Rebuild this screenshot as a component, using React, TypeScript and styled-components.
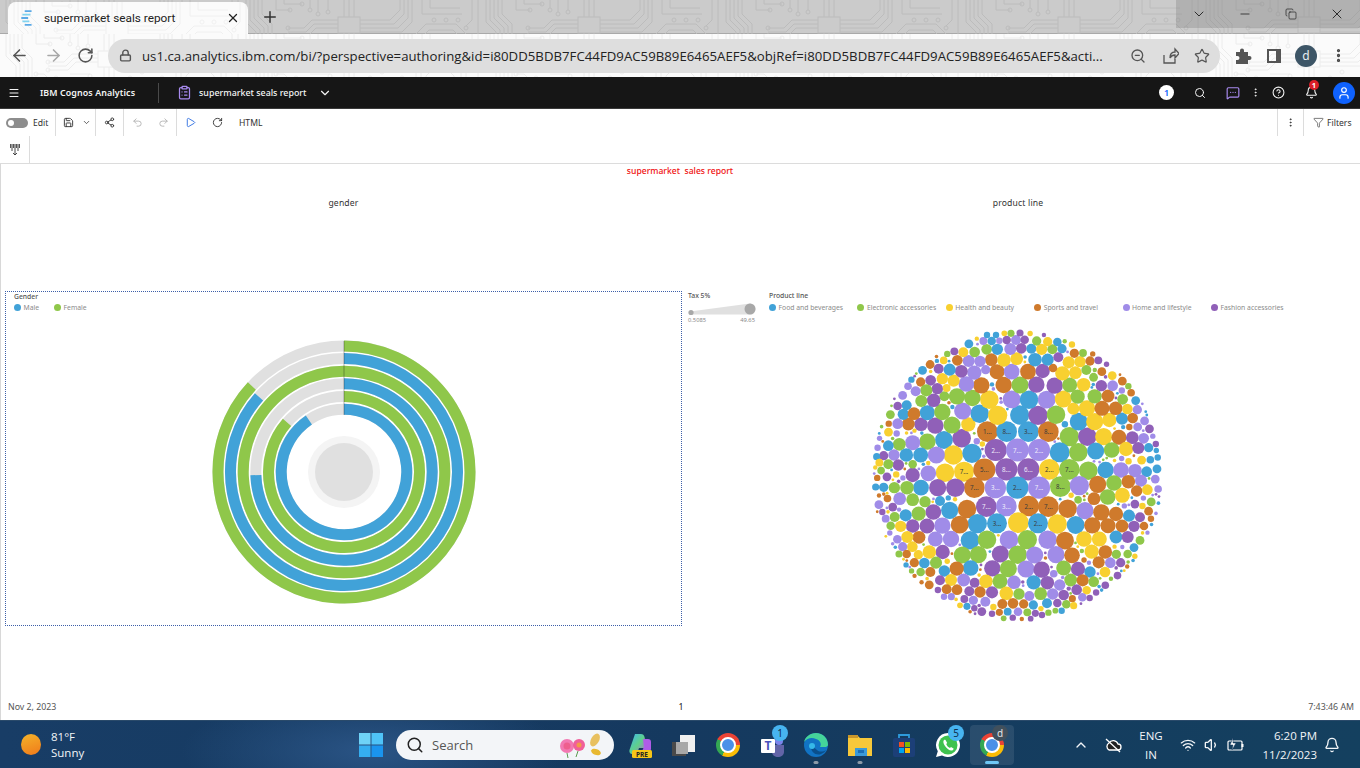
import React, { FC, ReactNode } from 'react'
import styled, { createGlobalStyle } from 'styled-components'
import {
  ArrowLeft,
  ArrowRight,
  Bell,
  ChevronDown,
  ChevronUp,
  ClipboardList,
  CircleHelp,
  Copy,
  Filter,
  Lock,
  Menu,
  MessageSquareMore,
  Minus,
  MoreVertical,
  Play,
  Plus,
  Redo2,
  RotateCw,
  Save,
  Search,
  Share2,
  Star,
  Undo2,
  User,
  Volume1,
  Wifi,
  X,
  ZoomOut,
} from 'lucide-react'

const GlobalStyle = createGlobalStyle`
  html, body { margin: 0; padding: 0; background: #fff; }
  body { font-family: "Noto Sans", "Liberation Sans", sans-serif; overflow: hidden; }
  * { box-sizing: border-box; }
`

const COLORS: Record<string, string> = {
  b: '#41a2d8',
  g: '#8fc74a',
  y: '#f8d030',
  o: '#cf7a2c',
  l: '#a08ce8',
  p: '#9060b8',
}

type Bubble = [number, number, number, string, string?]

// read off the reference in 3x zoom coordinates, top half then bottom half
const TOP: Bubble[] = [
  [367,320,29,'o','1...'],[425,320,29,'b','8...'],[490,320,29,'b','3...'],[550,320,29,'o','8...'],
  [613,335,27,'g'],[667,335,26,'p'],[716,335,24,'y'],[762,337,21,'o'],[802,338,18,'p'],[836,340,15,'l'],
  [237,345,25,'b'],[290,340,26,'p'],[187,350,23,'g'],[143,353,21,'l'],[103,358,18,'g'],[70,362,15,'b'],
  [261,300,24,'g'],[211,302,23,'p'],[168,298,19,'p'],[130,297,18,'o'],[98,296,15,'l'],[310,298,20,'y'],
  [344,266,26,'b'],[398,271,27,'y'],[464,270,27,'b'],[519,271,27,'p'],[573,269,26,'g'],[641,290,25,'b'],
  [689,290,24,'y'],[733,285,20,'y'],[771,281,17,'b'],[803,279,15,'o'],[115,268,16,'b'],[147,266,18,'o'],
  [187,263,21,'b'],[232,261,23,'g'],[293,258,24,'l'],[625,251,17,'y'],[666,250,23,'y'],[711,250,21,'o'],
  [752,250,19,'o'],[787,252,15,'y'],[817,254,13,'l'],[373,224,26,'y'],[440,223,25,'l'],[492,224,26,'b'],
  [545,224,25,'l'],[595,222,24,'y'],[638,215,20,'g'],[689,214,20,'g'],[729,213,18,'o'],[773,223,15,'g'],
  [322,219,23,'g'],[276,214,23,'g'],[238,214,14,'g'],[206,226,19,'p'],[169,228,17,'g'],[125,241,14,'b'],
  [98,243,12,'p'],[349,181,23,'o'],[416,180,23,'o'],[465,180,24,'g'],[514,179,23,'p'],[569,182,23,'p'],
  [614,180,21,'g'],[656,179,19,'y'],[709,182,16,'p'],[743,182,15,'l'],[304,177,22,'l'],[266,167,17,'y'],
  [232,161,16,'y'],[197,166,15,'p'],[167,171,13,'o'],[217,191,16,'p'],[184,196,17,'g'],[152,199,14,'l'],
  [245,189,11,'y'],[396,140,21,'o'],[440,140,22,'l'],[489,140,22,'o'],[533,138,20,'p'],[592,145,20,'y'],
  [631,143,18,'y'],[664,135,14,'g'],[564,129,12,'o'],[328,143,20,'l'],[289,139,18,'p'],[254,134,17,'b'],
  [221,131,14,'p'],[362,134,13,'l'],[379,104,18,'o'],[417,105,19,'y'],[455,101,18,'y'],[510,104,19,'b'],
  [548,104,17,'b'],[580,97,14,'p'],[611,112,17,'y'],[645,110,16,'y'],[675,108,13,'o'],[700,106,11,'p'],
  [345,109,16,'l'],[311,108,17,'l'],[277,106,15,'o'],[365,73,15,'g'],[397,73,16,'b'],[436,72,17,'l'],
  [469,70,15,'p'],[499,71,14,'b'],[530,73,16,'y'],[562,73,14,'g'],[591,71,13,'b'],[628,85,13,'o'],
  [654,84,11,'g'],[295,82,14,'y'],[268,79,11,'p'],[329,81,15,'g'],[425,45,12,'p'],[453,45,14,'l'],
  [479,44,12,'p'],[515,48,13,'g'],[548,50,13,'y'],[577,51,12,'b'],[380,48,12,'b'],[355,48,11,'l'],
  [403,47,9,'l'],[438,25,10,'g'],[465,24,10,'p'],[366,30,9,'b'],[393,30,9,'b'],[418,25,8,'y'],
  [265,390,27,'y'],[321,385,27,'b'],[214,390,24,'l'],[167,390,21,'b'],[124,390,19,'b'],[87,390,16,'l'],
  [56,392,13,'p'],[35,395,10,'b'],[392,375,31,'p','2...'],[457,375,32,'l','7...'],[522,375,31,'l','2...'],
  [584,382,28,'b'],[640,382,26,'g'],[692,378,24,'b'],[740,375,22,'g'],[783,372,20,'y'],[820,369,17,'p'],
  [851,368,13,'b'],[240,443,26,'y'],[297,440,28,'y','7...'],[358,434,31,'o','5...'],[424,433,31,'p','8...'],
  [490,433,31,'p','6...'],[553,433,29,'y','2...'],[613,433,29,'g','7...'],[670,437,26,'g'],[722,435,23,'b'],
  [768,435,22,'l'],[810,437,19,'l'],[845,440,15,'b'],[190,445,22,'l'],[143,450,20,'p'],[100,420,16,'p'],
  [70,418,14,'g'],[43,413,11,'y'],[143,418,12,'g'],
]

const BOTTOM: Bubble[] = [
  [328,38,29,'o','7...'],[391,38,30,'l','3...'],[457,38,31,'b','2...'],[522,38,31,'l','7...'],[586,35,29,'g','8...'],
  [643,32,27,'l'],[698,28,24,'o'],[747,24,22,'g'],[790,20,19,'o'],[828,17,17,'l'],[271,38,26,'p'],[218,38,24,'p'],
  [168,38,22,'b'],[126,38,19,'g'],[88,38,16,'g'],[56,37,13,'b'],[32,36,10,'b'],[364,95,29,'p','7...'],
  [424,93,29,'l','3...'],[491,93,29,'o','2...'],[550,95,29,'o','7...'],[608,101,26,'o'],[660,107,24,'l'],
  [709,112,23,'o'],[753,117,20,'o'],[792,122,17,'b'],[825,127,14,'p'],[306,102,26,'o'],[254,106,24,'b'],
  [205,111,22,'p'],[161,116,20,'g'],[122,121,17,'b'],[89,126,14,'g'],[62,131,11,'l'],[104,71,18,'l'],
  [143,74,18,'g'],[180,80,16,'g'],[225,78,14,'b'],[687,71,18,'o'],[728,66,22,'g'],[772,61,21,'y'],
  [815,48,16,'o'],[847,44,15,'y'],[396,145,28,'b','3...'],[460,143,29,'y'],[519,145,28,'b','2...'],
  [577,147,27,'y'],[632,150,25,'b'],[682,151,23,'o'],[729,152,21,'o'],[771,153,18,'o'],[807,154,16,'p'],
  [837,153,12,'o'],[337,146,27,'b'],[284,149,25,'o'],[232,152,23,'l'],[186,153,21,'p'],[143,153,19,'p'],
  [107,154,16,'y'],[77,152,12,'g'],[315,196,26,'b'],[366,194,26,'g'],[432,194,26,'l'],[487,194,27,'g'],
  [548,194,26,'l'],[600,197,25,'o'],[657,192,22,'y'],[703,192,21,'y'],[753,186,18,'b'],[788,186,17,'p'],
  [258,192,23,'l'],[211,192,21,'l'],[162,187,18,'o'],[127,186,17,'y'],[97,193,12,'l'],[292,240,24,'g'],
  [340,239,24,'g'],[406,237,24,'p'],[458,239,26,'g'],[509,240,24,'l'],[573,239,24,'l'],[621,241,22,'o'],
  [680,230,20,'y'],[721,231,19,'o'],[754,238,13,'g'],[788,237,12,'g'],[233,231,20,'p'],[193,231,19,'y'],
  [160,239,13,'y'],[142,215,15,'y'],[113,215,13,'l'],[125,237,12,'o'],[102,237,10,'g'],[317,279,22,'b'],
  [275,281,20,'o'],[382,280,23,'p'],[430,281,24,'g'],[483,282,24,'l'],[530,284,23,'p'],[596,279,21,'g'],
  [639,282,20,'p'],[675,291,16,'b'],[701,262,17,'o'],[736,263,15,'l'],[767,263,13,'p'],[720,291,15,'y'],
  [213,263,17,'g'],[178,264,15,'b'],[148,263,13,'o'],[238,288,16,'b'],[196,291,14,'o'],[167,291,12,'g'],
  [258,315,17,'y'],[296,315,18,'l'],[329,323,14,'p'],[363,319,19,'y'],[405,319,21,'g'],[447,322,19,'l'],
  [506,322,20,'b'],[547,323,19,'p'],[584,330,16,'l'],[617,315,18,'g'],[653,316,17,'o'],[686,320,15,'g'],
  [225,316,14,'p'],[245,343,14,'o'],[276,344,15,'o'],[313,349,14,'p'],[345,351,16,'o'],[381,352,17,'p'],
  [424,355,19,'y'],[462,357,16,'g'],[527,356,18,'g'],[563,357,16,'l'],[596,360,15,'p'],[635,344,15,'p'],
  [665,346,12,'y'],[493,363,14,'l'],[298,372,11,'p'],[325,376,13,'l'],[361,380,14,'l'],[412,387,14,'o'],
  [444,385,15,'o'],[476,387,13,'o'],[505,390,13,'b'],[546,385,14,'b'],[577,384,12,'p'],[604,388,12,'g'],
  [652,367,12,'l'],[674,369,9,'p'],[622,371,10,'o'],[626,392,10,'y'],[237,365,9,'l'],[259,365,10,'l'],
  [428,410,11,'b'],[459,410,12,'l'],[487,412,11,'g'],[511,415,10,'p'],[531,420,9,'p'],[403,412,10,'o'],
  [381,416,9,'p'],[497,431,8,'p'],[416,430,8,'g'],[590,407,9,'b'],[571,407,8,'g'],[328,400,9,'p'],
  [306,394,10,'b'],[285,391,8,'y'],
]

const CX = 1017
const CY = 475.5
const OUTER = 146
const GROW = 1.07

const buildBubbles = (): Bubble[] => {
  const placed: Bubble[] = [
    ...TOP.map(([x, y, r, c, t]): Bubble => [865 + x / 3, 325 + y / 3, (r / 3) * GROW, c, t]),
    ...BOTTOM.map(([x, y, r, c, t]): Bubble => [865 + x / 3, 475 + y / 3, (r / 3) * GROW, c, t]),
  ]
  let seed = 20231102
  const rand = () => {
    seed = (seed + 0x6d2b79f5) | 0
    let t = Math.imul(seed ^ (seed >>> 15), 1 | seed)
    t = (t + Math.imul(t ^ (t >>> 7), 61 | t)) ^ t
    return ((t ^ (t >>> 14)) >>> 0) / 4294967296
  }
  const keys = Object.keys(COLORS)
  // small circles fill what is left of the disc, biggest first
  for (const r of [4.4, 3.8, 3.2, 2.7, 2.2, 1.8, 1.4]) {
    for (let i = 0; i < 3000; i++) {
      const a = rand() * Math.PI * 2
      const d = Math.sqrt(rand()) * (OUTER - r)
      const x = CX + Math.cos(a) * d
      const y = CY + Math.sin(a) * d
      const free = placed.every((b) => Math.hypot(b[0] - x, b[1] - y) > b[2] + r + 0.1)
      if (free) placed.push([x, y, r, keys[Math.floor(rand() * keys.length)]])
    }
  }
  return placed
}

const BUBBLES = buildBubbles()

const Page = styled.div`
  width: 1360px;
  height: 768px;
  display: flex;
  flex-direction: column;
  overflow: hidden;
`

/* ---- browser chrome ---- */

const Frame = styled.div`
  position: relative;
  background: #fbfbfb;
  height: 77px;
  overflow: hidden;
`

const Backdrop = styled.svg`
  position: absolute;
  left: 0;
  width: 100%;
  pointer-events: none;
`

const TabStrip = styled.div`
  position: relative;
  height: 34px;
  display: flex;
  align-items: flex-end;
  padding-left: 8px;
  background: #cbcbcb;
  border-bottom: 1px solid #a9a9a9;
`

const Tab = styled.div`
  position: relative;
  width: 240px;
  height: 32px;
  margin-bottom: -1px;
  background: #fbfbfb;
  border-radius: 8px 8px 0 0;
  overflow: hidden;
`

const TabContent = styled.div`
  position: relative;
  height: 100%;
  display: flex;
  align-items: center;
  padding-left: 13px;
  font-family: Roboto, "Liberation Sans", sans-serif;
  font-size: 11.8px;
  color: #222;
`

const TabTitle = styled.span`
  margin-left: 11px;
  flex: 1;
  white-space: nowrap;
`

const NewTab = styled.div`
  position: relative;
  margin: 0 0 7px 13px;
  display: flex;
  color: #333;
`

const WindowControls = styled.div`
  position: absolute;
  top: 0;
  right: 0;
  width: 184px;
  height: 28px;
  display: flex;
  background: rgba(120, 120, 120, 0.3);
  color: #222;
`

const WindowButton = styled.div`
  width: 46px;
  display: flex;
  align-items: center;
  justify-content: center;
`

const NavBar = styled.div`
  position: relative;
  height: 43px;
  display: flex;
  align-items: center;
  color: #555;
`

const NavSlot = styled.div<{ $w: number; $muted?: boolean }>`
  width: ${(p) => p.$w}px;
  flex: none;
  display: flex;
  align-items: center;
  justify-content: center;
  color: ${(p) => (p.$muted ? '#a8a8a8' : '#555')};
`

const AddressBar = styled.div`
  width: 1112px;
  height: 34px;
  margin: 0 8px 0 6px;
  flex: none;
  display: flex;
  align-items: center;
  background: #dedede;
  border-radius: 17px;
  padding-left: 11px;
`

const AddressText = styled.span`
  width: 970px;
  margin: 0 13px 0 10px;
  flex: none;
  font-family: "Open Sans", "Liberation Sans", sans-serif;
  font-size: 13.2px;
  letter-spacing: 0.002em;
  color: #222;
  white-space: nowrap;
`

const Avatar = styled.div`
  width: 22px;
  height: 22px;
  border-radius: 50%;
  background: #3d5566;
  color: #e8eef2;
  display: flex;
  align-items: center;
  justify-content: center;
  font-size: 12px;
`

/* ---- cognos header ---- */

const AppBar = styled.header`
  height: 32px;
  flex: none;
  display: flex;
  align-items: center;
  background: #161616;
  border-bottom: 1px solid #3a3a3a;
  color: #f4f4f4;
`

const AppSlot = styled.div<{ $w: number }>`
  position: relative;
  width: ${(p) => p.$w}px;
  flex: none;
  display: flex;
  align-items: center;
  justify-content: center;
`

const BrandName = styled.span`
  width: 118px;
  flex: none;
  font-size: 8.9px;
  font-weight: 600;
  letter-spacing: 0.01em;
  white-space: nowrap;
`

const AppDivider = styled.div`
  width: 1px;
  height: 20px;
  background: #4a4a4a;
  flex: none;
`

const ReportName = styled.span`
  width: 109px;
  flex: none;
  font-size: 8.9px;
  font-weight: 500;
  white-space: nowrap;
`

const Spacer = styled.div`
  flex: 1;
`

const CountChip = styled.div`
  width: 15px;
  height: 15px;
  border-radius: 50%;
  background: #fff;
  color: #0f62fe;
  font-size: 9px;
  font-weight: 600;
  display: flex;
  align-items: center;
  justify-content: center;
`

const RedBadge = styled.div`
  position: absolute;
  top: -6px;
  left: 14px;
  width: 10px;
  height: 10px;
  border-radius: 50%;
  background: #da1e28;
  color: #fff;
  font-size: 7.5px;
  font-weight: 700;
  display: flex;
  align-items: center;
  justify-content: center;
`

const UserChip = styled.div`
  width: 22px;
  height: 22px;
  border-radius: 50%;
  background: #0f62fe;
  color: #fff;
  display: flex;
  align-items: center;
  justify-content: center;
`

/* ---- report toolbars ---- */

const ToolRow = styled.div`
  height: 27px;
  flex: none;
  display: flex;
  align-items: stretch;
  background: #fff;
  color: #333;
  font-size: 8.6px;
`

const SecondRow = styled(ToolRow)`
  height: 28px;
  border-bottom: 1px solid #dcdcdc;
`

const Tool = styled.div<{ $w: number; $color?: string }>`
  width: ${(p) => p.$w}px;
  flex: none;
  display: flex;
  align-items: center;
  justify-content: center;
  color: ${(p) => p.$color || '#333'};
`

const ToolDivider = styled.div`
  width: 1px;
  flex: none;
  background: #dcdcdc;
`

const EditToggle = styled.div`
  width: 55px;
  flex: none;
  display: flex;
  align-items: center;
  padding-left: 6px;
  gap: 5px;
`

const ToggleTrack = styled.div`
  width: 22px;
  height: 10px;
  border-radius: 5px;
  background: #8d8d8d;
  display: flex;
  align-items: center;
  padding-left: 2px;
`

const ToggleKnob = styled.div`
  width: 6px;
  height: 6px;
  border-radius: 50%;
  background: #fff;
`

const ToolText = styled.span`
  display: flex;
  align-items: center;
  white-space: nowrap;
`

const HtmlLabel = styled(ToolText)`
  margin-left: 8px;
`

const FilterTool = styled.div`
  width: 56px;
  flex: none;
  display: flex;
  align-items: center;
  padding-left: 9px;
  gap: 3px;
`

/* ---- report body ---- */

const Report = styled.main`
  flex: 1;
  display: flex;
  flex-direction: column;
  background: #fff;
  border-left: 1px solid #d8d8d8;
  color: #333;
`

const ReportTitle = styled.div`
  height: 14px;
  margin-left: -1px;
  text-align: center;
  font-size: 8.6px;
  line-height: 14px;
  font-weight: 500;
  color: #f01010;
`

const Headings = styled.div`
  height: 13px;
  margin-top: 19px;
  display: grid;
  grid-template-columns: 685px 1fr;
  font-size: 8.6px;
  line-height: 13px;
  letter-spacing: 0.02em;
  text-align: center;
`

const ProductHeading = styled.div`
  width: 664px;
`

const Charts = styled.div`
  margin-top: 81px;
  height: 335px;
  display: flex;
  align-items: flex-start;
  padding-left: 4px;
`

const GenderPanel = styled.section`
  width: 677px;
  height: 335px;
  flex: none;
  border: 1px dotted #3d5fa8;
  padding: 0 8px;
  display: flex;
  flex-direction: column;
`

const LegendTitle = styled.div`
  font-size: 6.8px;
  line-height: 9px;
  font-weight: 500;
  color: #555;
  white-space: nowrap;
`

const GenderLegend = styled.div`
  margin-top: 2px;
  display: flex;
  gap: 15px;
`

const LegendItem = styled.div`
  display: flex;
  align-items: center;
  gap: 2.5px;
  font-size: 6.8px;
  line-height: 9px;
  color: #8a8a8a;
  white-space: nowrap;
`

const Dot = styled.span<{ $c: string }>`
  width: 7px;
  height: 7px;
  border-radius: 50%;
  flex: none;
  background: ${(p) => p.$c};
`

const ChartArea = styled.div`
  flex: 1;
  display: flex;
  justify-content: center;
  padding-top: 25px;
`

const TaxPanel = styled.section`
  width: 81px;
  margin-left: 6px;
  flex: none;
`

const SliderLabels = styled.div`
  width: 67px;
  margin-top: 1px;
  display: flex;
  justify-content: space-between;
  font-size: 5.8px;
  line-height: 7px;
  color: #8a8a8a;
`

const ProductPanel = styled.section`
  flex: 1;
`

const ProductLegend = styled.div`
  margin-top: 3px;
  display: grid;
  grid-template-columns: repeat(6, 88.4px);
`

const BubbleSvg = styled.svg`
  display: block;
  margin: 13px 0 0 98px;
`

const BubbleLabel = styled.text<{ $light: boolean }>`
  font-size: 6.2px;
  font-family: "Noto Sans", sans-serif;
  text-anchor: middle;
  dominant-baseline: central;
  fill: ${(p) => (p.$light ? '#f1eefc' : '#3a3a3a')};
`

const Footer = styled.footer`
  margin-top: auto;
  height: 20px;
  display: grid;
  grid-template-columns: 1fr 1fr 1fr;
  padding: 0 6px 0 7px;
  font-size: 8.8px;
  line-height: 14px;
  color: #555;
`

const FooterCenter = styled.div`
  text-align: center;
  color: #222;
`

const FooterRight = styled.div`
  text-align: right;
`

/* ---- taskbar ---- */

const Taskbar = styled.footer`
  height: 48px;
  flex: none;
  display: flex;
  align-items: center;
  color: #f2f5f8;
  background:
    radial-gradient(ellipse 190px 60px at 372px 30px, #2a5485 0%, rgba(42, 84, 133, 0) 100%),
    linear-gradient(90deg, #183d66 0%, #15395f 50%, #14405f 100%);
  border-top: 1px solid #2a4a6a;
`

const Weather = styled.div`
  width: 358px;
  flex: none;
  display: flex;
  align-items: center;
  padding-left: 21px;
  gap: 10px;
`

const Sun = styled.div`
  width: 20px;
  height: 21px;
  border-radius: 50%;
  background: linear-gradient(160deg, #f4b42a, #f0791a);
`

const WeatherText = styled.div`
  font-family: "Open Sans", "Liberation Sans", sans-serif;
  font-size: 11.5px;
  line-height: 16px;
`

const SearchPill = styled.div`
  width: 218px;
  height: 30px;
  margin: 0 4px 0 12px;
  flex: none;
  display: flex;
  align-items: center;
  padding: 0 6px 0 10px;
  border-radius: 15px;
  background: #f3f5f8;
  color: #222;
  font-family: "Open Sans", "Liberation Sans", sans-serif;
  font-size: 13px;
`

const SearchWord = styled.span`
  margin-left: 8px;
  flex: 1;
  color: #555;
`

const TaskSlot = styled.div<{ $w?: number; $active?: boolean }>`
  position: relative;
  width: ${(p) => p.$w || 44}px;
  height: 40px;
  flex: none;
  display: flex;
  align-items: center;
  justify-content: center;
  border-radius: 4px;
  background: ${(p) => (p.$active ? 'rgba(255,255,255,0.09)' : 'transparent')};
`

const CountBadge = styled.div<{ $dark?: boolean }>`
  position: absolute;
  top: 0;
  right: 6px;
  width: 16px;
  height: 16px;
  border-radius: 50%;
  background: ${(p) => (p.$dark ? '#41505c' : '#47b4f0')};
  color: ${(p) => (p.$dark ? '#e5e5e5' : '#10304f')};
  font-size: 10px;
  display: flex;
  align-items: center;
  justify-content: center;
`

const RunningMark = styled.div<{ $active?: boolean }>`
  position: absolute;
  bottom: 1px;
  left: 50%;
  transform: translateX(-50%);
  width: ${(p) => (p.$active ? 14 : 5)}px;
  height: 3px;
  border-radius: 2px;
  background: ${(p) => (p.$active ? '#6ec6f5' : '#8c9aa8')};
`

const ChromeBall = styled.div`
  position: relative;
  width: 24px;
  height: 24px;
  border-radius: 50%;
  background: conic-gradient(from 0deg, #ea4335 0 90deg, #fbbc05 90deg 210deg, #34a853 210deg 300deg, #ea4335 300deg 360deg);
  display: flex;
  align-items: center;
  justify-content: center;
`

const ChromeCore = styled.div`
  width: 12px;
  height: 12px;
  border-radius: 50%;
  background: #4a90e8;
  border: 2px solid #fff;
  box-sizing: content-box;
`

const LangBlock = styled.div`
  width: 44px;
  flex: none;
  text-align: center;
  font-family: "Open Sans", "Liberation Sans", sans-serif;
  font-size: 11.5px;
  line-height: 19px;
`

const Clock = styled.div`
  width: 69px;
  flex: none;
  margin-right: 3px;
  text-align: right;
  font-family: "Open Sans", "Liberation Sans", sans-serif;
  font-size: 11.5px;
  line-height: 19px;
  white-space: nowrap;
`

const TrayEnd = styled.div`
  display: flex;
  align-items: center;
  margin-left: auto;
  padding-right: 16px;
`

const TraySlot = styled(TaskSlot)`
  height: 30px;
`

const TRACES = [
  // bundle running down with a jog
  'M6 0v22l10 10v40M10 0v20l10 10v42M14 0v18l10 10v44M18 0v16l10 10v46M22 0v14l10 10v48',
  // chip leads
  'M120 20h30l10-10V0M120 24h34l10-10V0M120 28h38l10-10V0M120 32h42l10-10V0',
  'M98 20H72l-8 8H48M98 24H74l-8 8H48M98 28H76l-8 8H48',
  'M104 33v39M109 33v39M114 33v39M104 17V0M109 17V0M114 17V0',
  // right hand loops
  'M176 72V34l10-10h30l10 10v38M181 72V38l8-8h24l8 8v34M186 72V42l6-6h16l6 6v30',
  'M36 0v10h14M44 0v4h18M70 0v8M78 0v12M88 0v10',
  'M232 0v20l-6 6M238 0v72M182 0v14h40M190 0v8h30',
  'M130 44h16l8 8v20M130 52h12l6 6v14M46 50v22M56 46v26M66 54v18M80 48v24M90 44v28',
  'M36 40h8l6 6M36 64h20M70 40h20',
]

const PADS: [number, number][] = [
  [50, 10], [62, 4], [70, 10], [78, 14], [88, 12], [48, 28], [48, 36], [130, 44], [130, 52],
  [46, 48], [56, 44], [66, 52], [80, 46], [90, 42], [194, 20], [206, 20], [218, 20], [162, 44], [172, 56], [226, 28],
  [36, 40], [36, 64], [124, 60], [142, 38],
]

const CircuitBackdrop: FC<{ id: string; stroke: string; top: number; height: number }> = ({ id, stroke, top, height }) => (
  <Backdrop style={{ top }} height={height}>
    <defs>
      <pattern id={id} width="240" height="72" patternUnits="userSpaceOnUse">
        <g fill="none" stroke={stroke} strokeWidth="1">
          {TRACES.map((d) => (
            <path key={d} d={d} />
          ))}
          <rect x="98" y="17" width="22" height="16" />
          {PADS.map(([x, y]) => (
            <circle key={`${x}-${y}`} cx={x} cy={y} r="2" />
          ))}
        </g>
      </pattern>
    </defs>
    <rect width="100%" height="100%" fill={`url(#${id})`} />
  </Backdrop>
)

const RING_TOP = { cx: 343, cy: 472 }

const arcPath = (r: number, deg: number) => {
  const a = ((deg - 90) * Math.PI) / 180
  const x = RING_TOP.cx + r * Math.cos(a)
  const y = RING_TOP.cy + r * Math.sin(a)
  if (deg >= 360) {
    return `M${RING_TOP.cx} ${RING_TOP.cy - r}A${r} ${r} 0 1 1 ${RING_TOP.cx - 0.01} ${RING_TOP.cy - r}`
  }
  return `M${RING_TOP.cx} ${RING_TOP.cy - r}A${r} ${r} 0 ${deg > 180 ? 1 : 0} 1 ${x} ${y}`
}

const RINGS: { r: number; deg: number; color: string }[] = [
  { r: 126, deg: 313, color: COLORS.g },
  { r: 113.5, deg: 311.5, color: COLORS.b },
  { r: 100.8, deg: 360, color: COLORS.g },
  { r: 88.2, deg: 268, color: COLORS.b },
  { r: 75.5, deg: 311, color: COLORS.g },
  { r: 62.8, deg: 326, color: COLORS.b },
]

const GenderRings = () => (
  <svg width="270" height="270" viewBox="208 337 270 270">
    {RINGS.map((ring) => (
      <g key={ring.r} fill="none" strokeWidth="11">
        <circle cx={RING_TOP.cx} cy={RING_TOP.cy} r={ring.r} stroke="#e0e0e0" />
        <path d={arcPath(ring.r, ring.deg)} stroke={ring.color} />
      </g>
    ))}
    <line x1="343" y1="341" x2="343" y2="415" stroke="#000" strokeOpacity="0.3" />
    <circle cx="343" cy="472" r="36" fill="#f4f4f4" />
    <circle cx="343" cy="472" r="29" fill="#e0e0e0" />
  </svg>
)

const SPRAY = ['M3 1h6', 'M1 4h7', 'M0 7h6', 'M1 10h6', 'M3 13h6']

const Favicon = () => (
  <svg width="12" height="16" viewBox="0 0 10 14">
    {SPRAY.map((d, i) => (
      <path key={d} d={d} stroke={i % 2 ? '#82d4f0' : '#5aa9e6'} strokeWidth="1.6" />
    ))}
  </svg>
)

const BubbleChart = () => (
  <BubbleSvg width="300" height="302" viewBox="867 325 300 302">
    {BUBBLES.map(([x, y, r, c], i) => (
      <circle key={i} cx={x} cy={y} r={r} fill={COLORS[c]} />
    ))}
    {BUBBLES.filter((b) => b[4]).map(([x, y, , c, t]) => (
      <BubbleLabel key={`${x}-${y}`} x={x} y={y} $light={c === 'p' || c === 'l'}>
        {t}
      </BubbleLabel>
    ))}
  </BubbleSvg>
)

const SliderWedge = () => (
  <svg width="70" height="14" viewBox="0 0 70 14" style={{ display: 'block', marginTop: 2 }}>
    <path d="M2 9.5L62 1.500a5.500 5.500 0 0 1 0 11L2 12.500z" fill="#e0e0e0" />
    <circle cx="3" cy="10.500" r="2.600" fill="#a8a8a8" />
    <circle cx="62" cy="7" r="5.500" fill="#a8a8a8" />
  </svg>
)

const LEGEND: [string, string][] = [
  ['Food and beverages', COLORS.b],
  ['Electronic accessories', COLORS.g],
  ['Health and beauty', COLORS.y],
  ['Sports and travel', COLORS.o],
  ['Home and lifestyle', COLORS.l],
  ['Fashion accessories', COLORS.p],
]

const CopilotIcon = () => (
  <svg width="28" height="28" viewBox="0 0 28 28">
    <defs>
      <linearGradient id="cp" x1="0" y1="0" x2="1" y2="1">
        <stop offset="0" stopColor="#3fb7f0" />
        <stop offset="0.5" stopColor="#5fd08a" />
        <stop offset="1" stopColor="#c05ce0" />
      </linearGradient>
    </defs>
    <path d="M9 3h6c2 0 3 1 3.500 3L21 17h-8l-2 6H6c-2 0-3-2-2.500-4z" fill="url(#cp)" />
    <path d="M17 8h5c2 0 3 1 3 3v7c0 2-2 4-4 4h-6l3-6z" fill="#b05ce8" />
    <rect x="6" y="19" width="20" height="8" rx="1.500" fill="#f5c518" />
    <text x="16" y="25.500" fontSize="6.500" fontWeight="700" textAnchor="middle" fill="#222" fontFamily="Noto Sans, sans-serif">PRE</text>
  </svg>
)

const WindowsLogo = () => (
  <svg width="24" height="24" viewBox="0 0 24 24">
    <rect x="0" y="0" width="11.500" height="11.500" fill="#6fd3f7" />
    <rect x="12.500" y="0" width="11.500" height="11.500" fill="#4fc3f7" />
    <rect x="0" y="12.500" width="11.500" height="11.500" fill="#35aef0" />
    <rect x="12.500" y="12.500" width="11.500" height="11.500" fill="#1a94ee" />
  </svg>
)

const Flowers = () => (
  <svg width="50" height="28" viewBox="0 0 50 28">
    <circle cx="9" cy="15" r="7" fill="#f279b2" />
    <circle cx="9" cy="15" r="3.500" fill="#ee5f8e" />
    <circle cx="21" cy="14" r="6" fill="#f0609a" />
    <circle cx="21" cy="14" r="2.500" fill="#f29a4a" />
    <path d="M9 22l1 5M20 20l-2 6" stroke="#5a9a50" strokeWidth="1" />
    <ellipse cx="37" cy="9" rx="4" ry="7" transform="rotate(30 37 9)" fill="#e8c060" />
    <ellipse cx="38" cy="21" rx="5" ry="3" transform="rotate(20 38 21)" fill="#e8b830" />
  </svg>
)

const WindowStack = () => (
  <svg width="26" height="26" viewBox="0 0 26 26">
    <rect x="1" y="10" width="14" height="14" fill="#4a4a4a" />
    <rect x="9" y="3" width="15" height="17" fill="#f0f0f0" />
    <rect x="5" y="10" width="12" height="12" fill="#a8a8a8" />
  </svg>
)

const TeamsIcon = () => (
  <svg width="26" height="26" viewBox="0 0 26 26">
    <circle cx="20" cy="9" r="4" fill="#7b83eb" />
    <path d="M13 13h12v7c0 3-3 5-6 5s-6-2-6-5z" fill="#6264a7" />
    <rect x="2" y="7" width="14" height="14" rx="1" fill="#fff" />
    <text x="9" y="18" fontSize="12" fontWeight="700" textAnchor="middle" fill="#4b53bc" fontFamily="Noto Sans, sans-serif">T</text>
  </svg>
)

const EdgeIcon = () => (
  <svg width="26" height="26" viewBox="0 0 26 26">
    <circle cx="13" cy="13" r="12" fill="#1173c4" />
    <path d="M25 13c0-7-5-12-12-12C7 1 2 5 1 10c3-4 8-5 12-3 4 1 6 5 4 8h6c1-1 2-1 2-2z" fill="#45d49a" />
    <path d="M8 15c0 5 5 9 10 7 2-1 4-2 5-4-3 2-7 2-9 0-2-1-3-3-3-5z" fill="#0a4f8c" />
    <circle cx="9" cy="14" r="3" fill="#35b8e8" />
  </svg>
)

const FilesIcon = () => (
  <svg width="26" height="26" viewBox="0 0 26 26">
    <path d="M1 3h9l3 3h12v18H1z" fill="#f7c83a" />
    <rect x="1" y="3" width="10" height="3" fill="#c9962a" />
    <rect x="8" y="16" width="12" height="8" fill="#3a9ad9" />
    <rect x="11" y="18" width="6" height="3" fill="#1a6eb5" />
  </svg>
)

const StoreIcon = () => (
  <svg width="26" height="26" viewBox="0 0 26 26">
    <path d="M8 6V3h10v3" fill="none" stroke="#2e9bdc" strokeWidth="1.800" />
    <rect x="2" y="6" width="22" height="19" rx="2" fill="#1c3f78" />
    <rect x="8" y="10" width="5" height="5" fill="#f25022" />
    <rect x="14" y="10" width="5" height="5" fill="#7fba00" />
    <rect x="8" y="16" width="5" height="5" fill="#00a4ef" />
    <rect x="14" y="16" width="5" height="5" fill="#ffb900" />
  </svg>
)

const WhatsappIcon = () => (
  <svg width="26" height="26" viewBox="0 0 26 26">
    <path d="M13 1a12 12 0 1 1-6 22.400L1 25l1.800-5.800A12 12 0 0 1 13 1z" fill="#fff" />
    <circle cx="13" cy="13" r="9.500" fill="#3fc24f" />
    <path d="M9 8c-1 1-1 3 1 6s5 5 7 4.500c1-.3 2-1.500 1.500-2l-2.500-1.500-1 1c-2-.8-3-2-3.800-4l1-1L10.500 8c-.5-.5-1-.3-1.500 0z" fill="#fff" />
  </svg>
)

const PuzzleIcon = () => (
  <svg width="18" height="18" viewBox="0 0 18 18">
    <path d="M2 5h4V3.500a2 2 0 0 1 4 0V5h4v4h1.500a2 2 0 0 1 0 4H14v4H2v-4h1.500a2 2 0 0 0 0-4H2z" fill="#555" />
  </svg>
)

const SidePanelIcon = () => (
  <svg width="14" height="14" viewBox="0 0 14 14">
    <rect x="1" y="1" width="12" height="12" fill="none" stroke="#555" strokeWidth="2" />
    <rect x="9" y="1" width="4" height="12" fill="#555" />
  </svg>
)

const ShareBoxIcon = () => (
  <svg width="18" height="18" viewBox="0 0 18 18" fill="none" stroke="#555" strokeWidth="1.300">
    <path d="M3 8v8h11v-4" />
    <path d="M9 11c0-4 2-6 5-6V2l4 4.500L14 11V8c-2 0-4 1-5 3z" />
  </svg>
)

const RowsIcon = () => (
  <svg width="12" height="13" viewBox="0 0 12 13" fill="none" stroke="#333">
    <rect x="1" y="1" width="10" height="4" fill="#555" stroke="none" />
    <path d="M3 1v4M6 1v4M9 1v4" stroke="#fff" strokeWidth="0.800" />
    <path d="M6 5v7M4 10l2 2 2-2M3 5v3M9 5v3" strokeWidth="0.900" />
  </svg>
)

const VpnOff = () => (
  <svg width="18" height="18" viewBox="0 0 18 18" fill="none" stroke="#fff" strokeWidth="1.300">
    <path d="M5 14a4 4 0 0 1 0-7 5 5 0 0 1 9 1 3 3 0 0 1 0 6z" fill="#222" />
    <path d="M2 3l14 13" />
  </svg>
)

const ChargeIcon = () => (
  <svg width="20" height="16" viewBox="0 0 20 16" fill="none" stroke="#fff" strokeWidth="1.200">
    <rect x="2" y="4" width="14" height="9" rx="1" />
    <path d="M16.500 7v3" strokeWidth="2" />
    <path d="M7 1L4 8h3l-1 5 4-7H7z" fill="#fff" stroke="#15395f" strokeWidth="0.500" />
  </svg>
)

const ToolIcon: FC<{ w: number; color?: string; children: ReactNode }> = ({ w, color, children }) => (
  <Tool $w={w} $color={color}>
    {children}
  </Tool>
)

const App: FC = () => (
  <Page>
    <GlobalStyle />
    <Frame>
      <CircuitBackdrop id="paper" stroke="#ececec" top={34} height={43} />
      <TabStrip>
        <CircuitBackdrop id="stripe" stroke="#bcbcbc" top={0} height={34} />
        <Tab>
          <CircuitBackdrop id="tabpaper" stroke="#f0f0f0" top={0} height={32} />
          <TabContent>
            <Favicon />
            <TabTitle>supermarket seals report</TabTitle>
            <NavSlot $w={30}>
              <X size={14} color="#222" strokeWidth={2.2} />
            </NavSlot>
          </TabContent>
        </Tab>
        <NewTab>
          <Plus size={18} strokeWidth={2} />
        </NewTab>
        <WindowControls>
          <WindowButton>
            <ChevronDown size={16} strokeWidth={1.4} />
          </WindowButton>
          <WindowButton>
            <Minus size={14} strokeWidth={1.4} />
          </WindowButton>
          <WindowButton>
            <Copy size={12} strokeWidth={1.4} />
          </WindowButton>
          <WindowButton>
            <X size={16} strokeWidth={1.4} />
          </WindowButton>
        </WindowControls>
      </TabStrip>
      <NavBar>
        <NavSlot $w={38}>
          <ArrowLeft size={19} strokeWidth={2} />
        </NavSlot>
        <NavSlot $w={30} $muted>
          <ArrowRight size={19} strokeWidth={2} />
        </NavSlot>
        <NavSlot $w={34}>
          <RotateCw size={17} strokeWidth={2.2} />
        </NavSlot>
        <AddressBar>
          <Lock size={13} strokeWidth={2.6} color="#555" />
          <AddressText>
            us1.ca.analytics.ibm.com/bi/?perspective=authoring&amp;id=i80DD5BDB7FC44FD9AC59B89E6465AEF5&amp;objRef=i80DD5BDB7FC44FD9AC59B89E6465AEF5&amp;acti...
          </AddressText>
          <NavSlot $w={26}>
            <ZoomOut size={16} />
          </NavSlot>
          <NavSlot $w={38}>
            <ShareBoxIcon />
          </NavSlot>
          <NavSlot $w={26}>
            <Star size={16} strokeWidth={1.8} />
          </NavSlot>
        </AddressBar>
        <NavSlot $w={30}>
          <PuzzleIcon />
        </NavSlot>
        <NavSlot $w={32}>
          <SidePanelIcon />
        </NavSlot>
        <NavSlot $w={32}>
          <Avatar>d</Avatar>
        </NavSlot>
        <NavSlot $w={32}>
          <MoreVertical size={17} strokeWidth={2.6} color="#444" />
        </NavSlot>
      </NavBar>
    </Frame>

    <AppBar>
      <AppSlot $w={28}>
        <Menu size={12} />
      </AppSlot>
      <AppSlot $w={12} />
      <BrandName>IBM Cognos Analytics</BrandName>
      <AppDivider />
      <AppSlot $w={15} />
      <AppSlot $w={20}>
        <ClipboardList size={15} color="#a98bf0" />
      </AppSlot>
      <AppSlot $w={5} />
      <ReportName>supermarket seals report</ReportName>
      <AppSlot $w={34}>
        <ChevronDown size={14} />
      </AppSlot>
      <Spacer />
      <AppSlot $w={33}>
        <CountChip>1</CountChip>
      </AppSlot>
      <AppSlot $w={33}>
        <Search size={12} />
      </AppSlot>
      <AppSlot $w={33}>
        <MessageSquareMore size={14} color="#a98bf0" />
      </AppSlot>
      <AppSlot $w={13}>
        <MoreVertical size={11} />
      </AppSlot>
      <AppSlot $w={33}>
        <CircleHelp size={13} />
      </AppSlot>
      <AppSlot $w={32}>
        <Bell size={13} />
        <RedBadge>1</RedBadge>
      </AppSlot>
      <AppSlot $w={33}>
        <UserChip>
          <User size={14} />
        </UserChip>
      </AppSlot>
    </AppBar>

    <ToolRow>
      <EditToggle>
        <ToggleTrack>
          <ToggleKnob />
        </ToggleTrack>
        <ToolText>Edit</ToolText>
      </EditToggle>
      <ToolDivider />
      <ToolIcon w={24}>
        <Save size={11} />
      </ToolIcon>
      <ToolIcon w={12}>
        <ChevronDown size={9} />
      </ToolIcon>
      <ToolIcon w={3}>{null}</ToolIcon>
      <ToolDivider />
      <ToolIcon w={27}>
        <Share2 size={11} />
      </ToolIcon>
      <ToolDivider />
      <ToolIcon w={26} color="#b4b4b4">
        <Undo2 size={11} />
      </ToolIcon>
      <ToolIcon w={26} color="#b4b4b4">
        <Redo2 size={11} />
      </ToolIcon>
      <ToolDivider />
      <ToolIcon w={27} color="#2f6fe0">
        <Play size={11} />
      </ToolIcon>
      <ToolIcon w={27}>
        <RotateCw size={11} />
      </ToolIcon>
      <HtmlLabel>HTML</HtmlLabel>
      <Spacer />
      <ToolDivider />
      <ToolIcon w={25}>
        <MoreVertical size={11} />
      </ToolIcon>
      <ToolDivider />
      <FilterTool>
        <Filter size={11} strokeWidth={1.4} />
        <ToolText>Filters</ToolText>
      </FilterTool>
    </ToolRow>
    <SecondRow>
      <ToolIcon w={29}>
        <RowsIcon />
      </ToolIcon>
      <ToolDivider />
    </SecondRow>

    <Report>
      <ReportTitle>supermarket&nbsp; sales report</ReportTitle>
      <Headings>
        <div>gender</div>
        <ProductHeading>product line</ProductHeading>
      </Headings>
      <Charts>
        <GenderPanel>
          <LegendTitle>Gender</LegendTitle>
          <GenderLegend>
            <LegendItem>
              <Dot $c={COLORS.b} />
              Male
            </LegendItem>
            <LegendItem>
              <Dot $c={COLORS.g} />
              Female
            </LegendItem>
          </GenderLegend>
          <ChartArea>
            <GenderRings />
          </ChartArea>
        </GenderPanel>
        <TaxPanel>
          <LegendTitle>Tax 5%</LegendTitle>
          <SliderWedge />
          <SliderLabels>
            <span>0.5085</span>
            <span>49.65</span>
          </SliderLabels>
        </TaxPanel>
        <ProductPanel>
          <LegendTitle>Product line</LegendTitle>
          <ProductLegend>
            {LEGEND.map(([name, color]) => (
              <LegendItem key={name}>
                <Dot $c={color} />
                {name}
              </LegendItem>
            ))}
          </ProductLegend>
          <BubbleChart />
        </ProductPanel>
      </Charts>
      <Footer>
        <div>Nov 2, 2023</div>
        <FooterCenter>1</FooterCenter>
        <FooterRight>7:43:46 AM</FooterRight>
      </Footer>
    </Report>

    <Taskbar>
      <Weather>
        <Sun />
        <WeatherText>
          <div>81°F</div>
          <div>Sunny</div>
        </WeatherText>
      </Weather>
      <TaskSlot $w={26}>
        <WindowsLogo />
      </TaskSlot>
      <SearchPill>
        <Search size={18} strokeWidth={2} />
        <SearchWord>Search</SearchWord>
        <Flowers />
      </SearchPill>
      <TaskSlot>
        <CopilotIcon />
      </TaskSlot>
      <TaskSlot>
        <WindowStack />
      </TaskSlot>
      <TaskSlot>
        <ChromeBall>
          <ChromeCore />
        </ChromeBall>
      </TaskSlot>
      <TaskSlot>
        <TeamsIcon />
        <CountBadge>1</CountBadge>
      </TaskSlot>
      <TaskSlot>
        <EdgeIcon />
        <RunningMark />
      </TaskSlot>
      <TaskSlot>
        <FilesIcon />
        <RunningMark />
      </TaskSlot>
      <TaskSlot>
        <StoreIcon />
      </TaskSlot>
      <TaskSlot>
        <WhatsappIcon />
        <CountBadge>5</CountBadge>
      </TaskSlot>
      <TaskSlot $active>
        <ChromeBall>
          <ChromeCore />
        </ChromeBall>
        <CountBadge $dark>d</CountBadge>
        <RunningMark $active />
      </TaskSlot>
      <TrayEnd>
        <TraySlot $w={32}>
          <ChevronUp size={16} />
        </TraySlot>
        <TraySlot $w={32}>
          <VpnOff />
        </TraySlot>
        <LangBlock>
          <div>ENG</div>
          <div>IN</div>
        </LangBlock>
        <TraySlot $w={3} />
        <TraySlot $w={24}>
          <Wifi size={16} />
        </TraySlot>
        <TraySlot $w={24}>
          <Volume1 size={16} />
        </TraySlot>
        <TraySlot $w={24}>
          <ChargeIcon />
        </TraySlot>
        <Clock>
          <div>6:20 PM</div>
          <div>11/2/2023</div>
        </Clock>
        <TraySlot $w={24}>
          <Bell size={16} />
        </TraySlot>
      </TrayEnd>
    </Taskbar>
  </Page>
)

export default App
